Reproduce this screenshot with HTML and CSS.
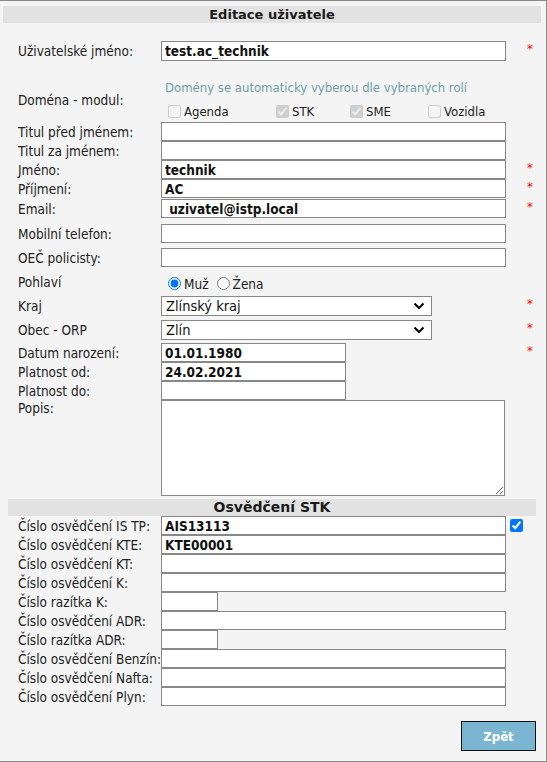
FILE: index.html
```html
<!DOCTYPE html>
<html lang="cs">
<head>
<meta charset="utf-8">
<title>Editace uživatele</title>
<link rel="stylesheet" href="styles.css">
</head>
<body>
<div class="page">
  <div class="title">Editace uživatele</div>

  <div class="row r-user">
    <span class="lbl">Uživatelské jméno:</span>
    <input class="inp wide tall" value="test.ac_technik">
    <span class="req">*</span>
  </div>

  <div class="row r-domain">
    <span class="lbl lbl-domain">Doména - modul:</span>
    <div class="domain">
      <div class="hint">Domény se automaticky vyberou dle vybraných rolí</div>
      <div class="modules">
        <label class="mod"><input type="checkbox" disabled>Agenda</label>
        <label class="mod"><input type="checkbox" disabled checked>STK</label>
        <label class="mod"><input type="checkbox" disabled checked>SME</label>
        <label class="mod"><input type="checkbox" disabled>Vozidla</label>
      </div>
    </div>
  </div>

  <div class="row r-first">
    <span class="lbl">Titul před jménem:</span>
    <input class="inp wide">
  </div>
  <div class="row">
    <span class="lbl">Titul za jménem:</span>
    <input class="inp wide">
  </div>
  <div class="row">
    <span class="lbl">Jméno:</span>
    <input class="inp wide" value="technik">
    <span class="req">*</span>
  </div>
  <div class="row">
    <span class="lbl">Příjmení:</span>
    <input class="inp wide" value="AC">
    <span class="req">*</span>
  </div>
  <div class="row r-email">
    <span class="lbl">Email:</span>
    <input class="inp wide" value=" uzivatel@istp.local">
    <span class="req">*</span>
  </div>
  <div class="row r-mobile">
    <span class="lbl">Mobilní telefon:</span>
    <input class="inp wide">
  </div>
  <div class="row r-oec">
    <span class="lbl">OEČ policisty:</span>
    <input class="inp wide">
  </div>

  <div class="row r-gender">
    <span class="lbl">Pohlaví</span>
    <div class="radios">
      <label class="rad"><input type="radio" name="g" checked>Muž</label>
      <label class="rad"><input type="radio" name="g">Žena</label>
    </div>
  </div>

  <div class="row r-kraj">
    <span class="lbl">Kraj</span>
    <div class="sel">
      <select><option>Zlínský kraj</option></select>
      <svg class="chev" width="12" height="8" viewBox="0 0 12 8"><path d="M1.5 1.5 L6 6 L10.5 1.5" fill="none" stroke="#000" stroke-width="2"/></svg>
    </div>
    <span class="req">*</span>
  </div>
  <div class="row r-obec">
    <span class="lbl">Obec - ORP</span>
    <div class="sel">
      <select><option>Zlín</option></select>
      <svg class="chev" width="12" height="8" viewBox="0 0 12 8"><path d="M1.5 1.5 L6 6 L10.5 1.5" fill="none" stroke="#000" stroke-width="2"/></svg>
    </div>
    <span class="req">*</span>
  </div>

  <div class="row r-datum">
    <span class="lbl">Datum narození:</span>
    <input class="inp date" value="01.01.1980">
    <span class="req">*</span>
  </div>
  <div class="row">
    <span class="lbl">Platnost od:</span>
    <input class="inp date" value="24.02.2021">
  </div>
  <div class="row">
    <span class="lbl">Platnost do:</span>
    <input class="inp date">
  </div>
  <div class="row r-popis">
    <span class="lbl">Popis:</span>
    <textarea class="area"></textarea>
  </div>

  <div class="section">Osvědčení STK</div>

  <div class="row">
    <span class="lbl">Číslo osvědčení IS TP:</span>
    <input class="inp wide" value="AIS13113">
    <input class="chk" type="checkbox" checked>
  </div>
  <div class="row">
    <span class="lbl">Číslo osvědčení KTE:</span>
    <input class="inp wide" value="KTE00001">
  </div>
  <div class="row">
    <span class="lbl">Číslo osvědčení KT:</span>
    <input class="inp wide">
  </div>
  <div class="row">
    <span class="lbl">Číslo osvědčení K:</span>
    <input class="inp wide">
  </div>
  <div class="row">
    <span class="lbl">Číslo razítka K:</span>
    <input class="inp small">
  </div>
  <div class="row">
    <span class="lbl">Číslo osvědčení ADR:</span>
    <input class="inp wide">
  </div>
  <div class="row">
    <span class="lbl">Číslo razítka ADR:</span>
    <input class="inp small">
  </div>
  <div class="row">
    <span class="lbl">Číslo osvědčení Benzín:</span>
    <input class="inp wide">
  </div>
  <div class="row">
    <span class="lbl">Číslo osvědčení Nafta:</span>
    <input class="inp wide">
  </div>
  <div class="row">
    <span class="lbl">Číslo osvědčení Plyn:</span>
    <input class="inp wide">
  </div>

  <div class="actions">
    <button class="btn" type="button">Zpět</button>
  </div>
</div>
</body>
</html>
```

FILE: styles.css
```css
html, body {
  margin: 0;
  padding: 0;
  background: #ffffff;
}

body {
  font-family: "DejaVu Sans Condensed", "DejaVu Sans", sans-serif;
  font-stretch: condensed;
  font-size: 13.5px;
  color: #222;
}

.page {
  width: 547px;
  height: 762px;
  box-sizing: border-box;
  background: #f4f4f4;
  border: 1px solid #888;
  border-left: none;
  display: flex;
  flex-direction: column;
}

.title {
  margin: 5px 5px 0 3px;
  height: 17px;
  line-height: 17px;
  background: #e2e2e2;
  text-align: center;
  font-family: "DejaVu Sans", sans-serif;
  font-stretch: normal;
  font-size: 13px;
  font-weight: bold;
  color: #1a1a1a;
}

.row {
  display: grid;
  grid-template-columns: 143px 345px 1fr;
  align-items: center;
  padding-left: 18px;
  height: 19px;
}

.lbl {
  white-space: nowrap;
  line-height: 16px;
}

.inp {
  box-sizing: border-box;
  height: 19px;
  margin: 0;
  padding: 0 3px;
  border: 1px solid #888;
  border-radius: 0;
  background: #fff;
  font-family: inherit;
  font-stretch: condensed;
  font-size: 13.5px;
  font-weight: bold;
  color: #111;
  outline: none;
}

.wide { width: 345px; }
.date { width: 185px; }
.small { width: 57px; }
.tall { height: 20px; }

.req {
  color: #f00;
  font-size: 13px;
  padding-left: 21px;
  align-self: start;
  line-height: 13px;
  margin-top: 1px;
}

.r-user { margin-top: 18px; height: 20px; }

.r-domain {
  height: 61px;
  align-items: start;
}
.lbl-domain { margin-top: 31px; }
.domain { padding-top: 19px; }
.hint {
  color: #6e9fa8;
  font-size: 13px;
  line-height: 16px;
  padding-left: 4px;
  white-space: nowrap;
}
.modules {
  display: grid;
  grid-template-columns: 108px 74px 78px auto;
  margin-top: 7px;
  height: 16px;
  align-items: center;
  padding-left: 7px;
  font-size: 13px;
}
.mod {
  display: flex;
  align-items: center;
  white-space: nowrap;
}
.mod input {
  margin: 0 3px 0 0;
  width: 13px;
  height: 13px;
}

.r-email { margin-top: 1px; }
.r-mobile { margin-top: 6px; }
.r-oec { margin-top: 5px; }

.r-gender { margin-top: 5px; height: 20px; }
.radios {
  display: flex;
  align-items: center;
  padding-left: 7px;
  padding-top: 3px;
}
.rad {
  display: flex;
  align-items: center;
  margin-right: 8px;
}
.rad input {
  margin: 0 3px 0 0;
  width: 13px;
  height: 13px;
}

.r-kraj { margin-top: 4px; height: 20px; }
.r-obec { margin-top: 4px; height: 20px; }

.sel {
  position: relative;
  width: 271px;
  height: 20px;
}
.sel select {
  appearance: none;
  -webkit-appearance: none;
  box-sizing: border-box;
  width: 271px;
  height: 20px;
  margin: 0;
  padding: 0 0 0 4px;
  border: 1px solid #888;
  border-radius: 0;
  background: #fff;
  font-family: inherit;
  font-stretch: condensed;
  font-size: 14.5px;
  color: #111;
}
.chev {
  position: absolute;
  right: 7px;
  top: 6px;
  pointer-events: none;
}

.r-datum { margin-top: 3px; }

.r-popis {
  height: 96px;
  align-items: start;
}
.area {
  box-sizing: border-box;
  width: 344px;
  height: 96px;
  margin: 0;
  border: 1px solid #888;
  border-radius: 0;
  background: #fff;
  resize: both;
}

.section {
  margin: 3px 10px 0 8px;
  height: 17px;
  line-height: 17px;
  background: #e2e2e2;
  text-align: center;
  font-family: "DejaVu Sans", sans-serif;
  font-stretch: normal;
  font-size: 14px;
  font-weight: bold;
  color: #1a1a1a;
}

.chk {
  margin: 0 0 0 4px;
  width: 13px;
  height: 13px;
  accent-color: #0075ff;
}

.actions {
  display: flex;
  justify-content: flex-end;
  margin: 15px 10px 0 0;
}
.btn {
  box-sizing: border-box;
  width: 75px;
  height: 30px;
  margin: 0;
  border: 1px solid #111;
  border-radius: 0;
  background: #7ab6d1;
  color: #fff;
  font-family: inherit;
  font-stretch: condensed;
  font-size: 13px;
  font-weight: bold;
}
```
